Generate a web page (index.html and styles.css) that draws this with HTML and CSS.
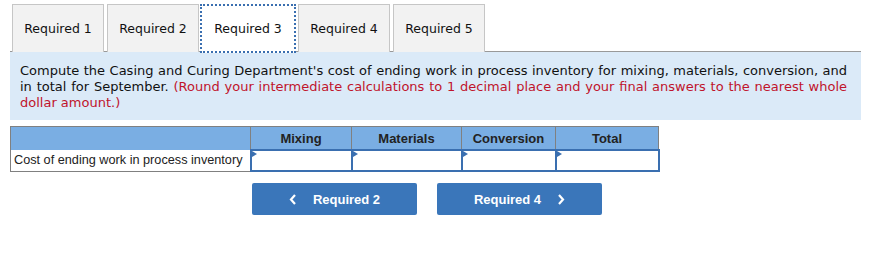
FILE: index.html
```html
<!DOCTYPE html>
<html>
<head>
<meta charset="utf-8">
<link rel="stylesheet" href="styles.css">
</head>
<body>
<div class="wrap">
  <div class="tabs">
    <div class="tab">Required 1</div>
    <div class="tab">Required 2</div>
    <div class="tab active">Required 3</div>
    <div class="tab">Required 4</div>
    <div class="tab">Required 5</div>
  </div>
  <div class="panel">
    <p class="prompt">Compute the Casing and Curing Department's cost of ending work in process inventory for mixing, materials, conversion, and in total for September. <span class="note">(Round your intermediate calculations to 1 decimal place and your final answers to the nearest whole dollar amount.)</span></p>
  </div>
  <table class="grid">
    <thead>
      <tr>
        <th class="c-label"></th>
        <th class="c-mix">Mixing</th>
        <th class="c-mat">Materials</th>
        <th class="c-conv">Conversion</th>
        <th class="c-tot">Total</th>
      </tr>
    </thead>
    <tbody>
      <tr>
        <td class="label">Cost of ending work in process inventory</td>
        <td class="inp"><span class="flag"></span></td>
        <td class="inp"><span class="flag"></span></td>
        <td class="inp"><span class="flag"></span></td>
        <td class="inp"><span class="flag"></span></td>
      </tr>
    </tbody>
  </table>
  <div class="nav">
    <button class="btn"><svg class="chev" width="8" height="11" viewBox="0 0 8 11"><polyline points="6,1 2,5.5 6,10" fill="none" stroke="#fff" stroke-width="2.2"/></svg>Required 2</button>
    <button class="btn">Required 4<svg class="chev right" width="8" height="11" viewBox="0 0 8 11"><polyline points="2,1 6,5.5 2,10" fill="none" stroke="#fff" stroke-width="2.2"/></svg></button>
  </div>
</div>
</body>
</html>
```

FILE: styles.css
```css
html, body {
  margin: 0;
  padding: 0;
  background: #fff;
}
.wrap {
  padding: 4px 0 0 10px;
  width: 851px;
  font-family: "DejaVu Sans", Verdana, sans-serif;
}
.tabs {
  display: flex;
  padding-left: 2px;
  gap: 3px;
  height: 47px;
  position: relative;
  z-index: 1;
}
.tab {
  box-sizing: border-box;
  width: 92px;
  height: 48px;
  border: 1px solid #c6c6c6;
  border-bottom: none;
  background: #f2f2f2;
  font-size: 12.5px;
  color: #111;
  display: flex;
  align-items: center;
  justify-content: center;
}
.tab.active {
  width: 96px;
  margin: 0 -1px 0 -2px;
  background: #fff;
  border: 2px dotted #3a6fb0;
  height: 49px;
}
.panel {
  background: #dbeaf8;
  border-top: 1px solid #999;
  padding: 11px 14px 9px 10px;
}
.prompt {
  margin: 0;
  font-size: 13px;
  line-height: 16px;
  color: #111;
  text-align: justify;
}
.note {
  color: #c0142c;
}
.grid {
  margin-top: 6px;
  border-collapse: collapse;
  table-layout: fixed;
  width: 643px;
  font-family: "Liberation Sans", Arial, sans-serif;
  font-size: 13px;
  border: 1px solid #808080;
}
.grid th {
  background: #7aaee3;
  height: 22px;
  padding: 0;
  font-weight: bold;
  color: #222;
  border: 1px solid #808080;
  border-bottom: none;
}
.c-label { width: 239px; }
.c-mix { width: 100px; }
.c-mat { width: 109px; }
.c-conv { width: 93px; }
.c-tot { width: 102px; }
.grid td {
  padding: 0;
  height: 19px;
}
.label {
  padding: 0 0 0 3px !important;
  font-size: 12.7px;
  color: #222;
  white-space: nowrap;
  overflow: hidden;
  border-right: 1px solid #808080;
}
.inp {
  border: 2px solid #3a6fb0;
  background: #fff;
  position: relative;
}
.flag {
  position: absolute;
  left: 0;
  top: 0;
  width: 0;
  height: 0;
  border-top: 3px solid transparent;
  border-bottom: 3px solid transparent;
  border-left: 5px solid #3a6fb0;
}
.nav {
  display: flex;
  gap: 20px;
  padding-left: 242px;
  margin-top: 11px;
}
.btn {
  width: 165px;
  height: 32px;
  border: none;
  border-radius: 2px;
  background: #3a76ba;
  color: #fff;
  font-family: "Liberation Sans", Arial, sans-serif;
  font-weight: bold;
  font-size: 13px;
  display: flex;
  align-items: center;
  justify-content: center;
  padding: 0;
}
.chev {
  margin-right: 16px;
}
.chev.right {
  margin-right: 0;
  margin-left: 16px;
}
```
